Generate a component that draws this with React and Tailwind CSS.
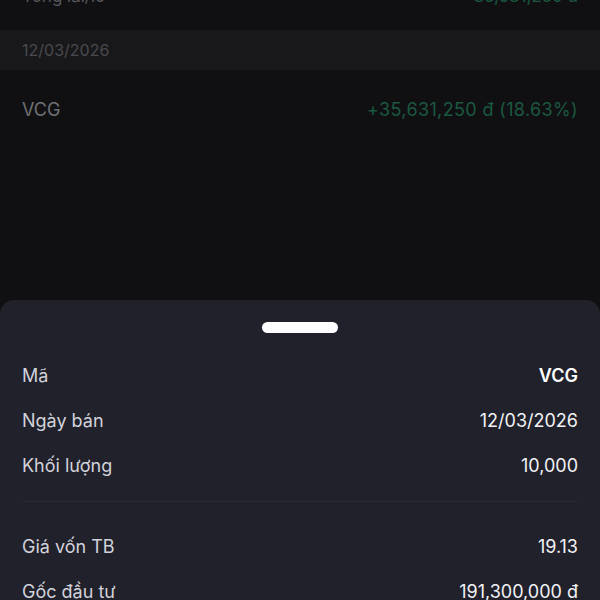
export default function App() {
  const rows1 = [
    ["Mã", "VCG", true],
    ["Ngày bán", "12/03/2026"],
    ["Khối lượng", "10,000"],
  ];
  const rows2 = [
    ["Giá vốn TB", "19.13"],
    ["Gốc đầu tư", "191,300,000 đ"],
  ];
  return (
    <div
      className="w-[600px] h-[600px] overflow-hidden bg-[#101013] flex flex-col"
      style={{ fontFamily: "Inter, 'Noto Sans', sans-serif" }}
    >
      <div className="h-[48px] -mt-[18px] px-[22px] flex items-start justify-between text-[17px] leading-[20px] shrink-0">
        <span className="text-[#56565a] mt-[4px]">Tổng lãi/lỗ</span>
        <span className="text-[#1b5840] mt-[4px]">+35,631,250 đ</span>
      </div>
      <div className="h-[40px] bg-[#18181a] px-[22px] flex items-center text-[16px] text-[#4a4a4e] shrink-0">
        12/03/2026
      </div>
      <div className="h-[78px] px-[22px] flex items-center justify-between text-[18px] shrink-0">
        <span className="text-[#707074]">VCG</span>
        <span className="text-[#1b5840] tracking-[0.02em]">+35,631,250 đ (18.63%)</span>
      </div>
      <div className="flex-1" />
      <div className="h-[300px] shrink-0 bg-[#21212c] rounded-t-[14px] px-[22px] flex flex-col">
        <div className="flex justify-center pt-[22px] pb-[20px] shrink-0">
          <div className="w-[76px] h-[11px] rounded-full bg-white" />
        </div>
        {rows1.map(([l, v, b]) => (
          <div key={l} className="h-[45px] shrink-0 flex items-center justify-between text-[18px]">
            <span className="text-[#d2d2da]">{l}</span>
            <span className={b ? "text-white font-semibold" : "text-[#f2f2f5]"}>{v}</span>
          </div>
        ))}
        <div className="h-px shrink-0 bg-[#2a2a37] mt-[13px] mb-[22px]" />
        {rows2.map(([l, v]) => (
          <div key={l} className="h-[45px] flex items-center justify-between text-[18px] shrink-0">
            <span className="text-[#d2d2da]">{l}</span>
            <span className="text-[#f2f2f5]">{v}</span>
          </div>
        ))}
      </div>
    </div>
  );
}
